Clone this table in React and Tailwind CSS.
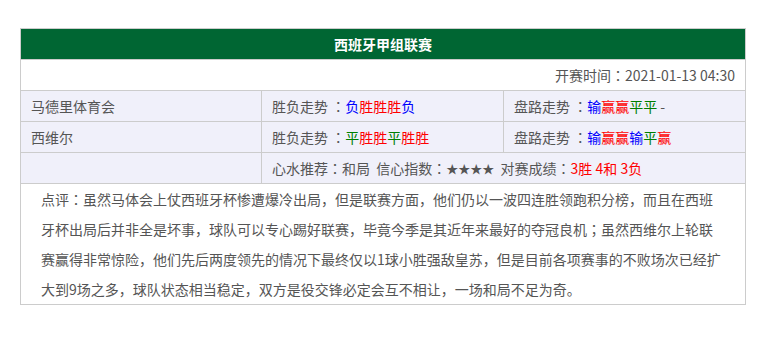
const C = ({ c, children }) => <span className={c}>{children}</span>;

const blue = "text-[#0000ff]";
const red = "text-[#ff0000]";
const green = "text-[#008000]";

// centered full-width punctuation, as in the original
const P = ({ children }) => (
  <span style={{ fontFamily: '"Noto Sans CJK JP", sans-serif' }}>{children}</span>
);

const Trend = ({ items }) =>
  items.map((t, i) => (
    <C key={i} c={t === "负" || t === "输" ? blue : t === "平" ? green : red}>
      {t}
    </C>
  ));

const App = () => (
  <div
    className="min-h-[352px] bg-white pl-[20px] pt-[28px] text-[14px] text-[#555]"
    style={{ fontFamily: '"Noto Sans CJK SC", "Noto Sans", sans-serif' }}
  >
    <div className="w-[726px] border border-[#cccccc]">
      <div className="h-[30px] bg-[#006633] text-center font-bold leading-[30px] text-white">
        西班牙甲组联赛
      </div>
      <div className="h-[31px] border-t border-[#cccccc] pr-[10px] text-right leading-[30px]">
        开赛时间<P>：</P>2021-01-13 04:30
      </div>
      <div className="grid h-[31px] grid-cols-[240px_242px_242px] border-t border-[#cccccc] bg-[#f0f0fa] leading-[30px]">
        <div className="pl-[10px]">马德里体育会</div>
        <div className="border-l border-[#cccccc] pl-[10px]">
          胜负走势 <P>：</P><Trend items={["负", "胜", "胜", "胜", "负"]} />
        </div>
        <div className="border-l border-[#cccccc] pl-[10px]">
          盘路走势 <P>：</P><Trend items={["输", "赢", "赢", "平", "平"]} /> -
        </div>
      </div>
      <div className="grid h-[31px] grid-cols-[240px_242px_242px] border-t border-[#cccccc] bg-[#f0f0fa] leading-[30px]">
        <div className="pl-[10px]">西维尔</div>
        <div className="border-l border-[#cccccc] pl-[10px]">
          胜负走势 <P>：</P><Trend items={["平", "胜", "胜", "平", "胜", "胜"]} />
        </div>
        <div className="border-l border-[#cccccc] pl-[10px]">
          盘路走势 <P>：</P><Trend items={["输", "赢", "赢", "输", "平", "赢"]} />
        </div>
      </div>
      <div className="grid h-[31px] grid-cols-[240px_484px] border-t border-[#cccccc] bg-[#f0f0fa] leading-[30px]">
        <div />
        <div className="border-l border-[#cccccc] pl-[10px] whitespace-pre">
          心水推荐<P>：</P>和局  信心指数<P>：</P><span className="text-[12px]">★★★★</span>  对赛成绩<P>：</P>
          <C c={red}>3胜 4和 3负</C>
        </div>
      </div>
      <div className="border-t border-[#cccccc] pl-[20px] pr-[21px] leading-[30px]">
        点评<P>：</P>虽然马体会上仗西班牙杯惨遭爆冷出局，但是联赛方面，他们仍以一波四连胜领跑积分榜，而且在西班牙杯出局后并非全是坏事，球队可以专心踢好联赛，毕竟今季是其近年来最好的夺冠良机<P>；</P>虽然西维尔上轮联赛赢得非常惊险，他们先后两度领先的情况下最终仅以1球小胜强敌皇苏，但是目前各项赛事的不败场次已经扩大到9场之多，球队状态相当稳定，双方是役交锋必定会互不相让，一场和局不足为奇。
      </div>
    </div>
  </div>
);

export default App;
